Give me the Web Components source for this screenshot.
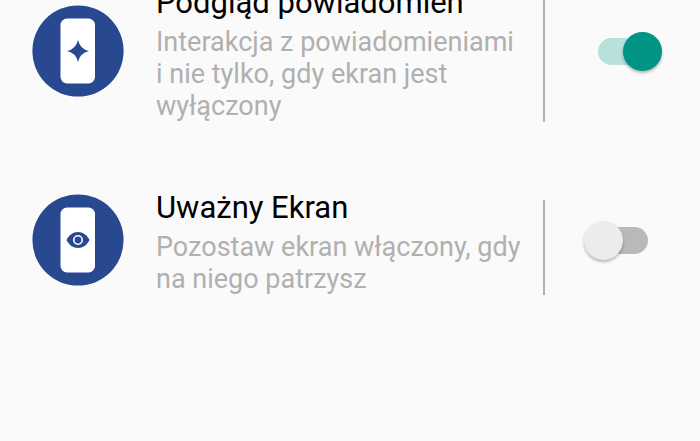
<!DOCTYPE html>
<html lang="pl">
<head>
<meta charset="utf-8">
<meta name="viewport" content="width=device-width, initial-scale=1">
<title>Ustawienia ekranu</title>
<style>
  body {
    margin: 0;
    background: #fafafa;
    color: #000;
    font-family: Roboto, "Liberation Sans", sans-serif;
  }
</style>
</head>
<body>
<settings-list>
  <setting-row checked>
    <phone-icon slot="icon" symbol="star"></phone-icon>
    Podgląd powiadomień
    <span slot="summary">Interakcja z powiadomieniami i nie tylko, gdy ekran jest wyłączony</span>
  </setting-row>
  <setting-row>
    <phone-icon slot="icon" symbol="eye"></phone-icon>
    Uważny Ekran
    <span slot="summary">Pozostaw ekran włączony, gdy na niego patrzysz</span>
  </setting-row>
</settings-list>

<script>
class SettingsList extends HTMLElement {
  constructor() {
    super();
    this.attachShadow({ mode: "open" });
  }

  connectedCallback() {
    // the list is scrolled a little past its first title
    this.shadowRoot.innerHTML = `
      <style>
        :host {
          display: flex;
          flex-direction: column;
          gap: 66px;
          margin-top: -17px;
        }
      </style>
      <slot></slot>
    `;
  }
}

class PhoneIcon extends HTMLElement {
  constructor() {
    super();
    this.attachShadow({ mode: "open" });
  }

  connectedCallback() {
    const symbols = {
      star: `<path fill="#284990" d="M46 35Q48 44 57 46Q48 48 46 57Q44 48 35 46Q44 44 46 35Z"/>`,
      eye: `
        <path fill="#284990" d="M34.5 46C37 41 41 38 46 38S55 41 57.5 46C55 51 51 54 46 54S37 51 34.5 46Z"/>
        <circle cx="46" cy="46" r="4.2" fill="#284990" stroke="#fff" stroke-width="1.6"/>
      `,
    };

    this.shadowRoot.innerHTML = `
      <style>
        :host {
          display: block;
        }
        svg {
          display: block;
          width: 92px;
          height: 92px;
        }
      </style>
      <svg viewBox="0 0 92 92" aria-hidden="true">
        <circle cx="46" cy="46" r="45.6" fill="#284990"/>
        <rect x="28.5" y="13.5" width="34.5" height="65" rx="6.5" fill="#fff"/>
        ${symbols[this.getAttribute("symbol")] || ""}
      </svg>
    `;
  }
}

class SettingRow extends HTMLElement {
  constructor() {
    super();
    this.attachShadow({ mode: "open" });
  }

  connectedCallback() {
    this.shadowRoot.innerHTML = `
      <style>
        :host {
          display: flex;
          align-items: center;
          padding: 0 38px 0 32px;
        }
        ::slotted(phone-icon) {
          margin-bottom: 3px;
        }
        .text {
          flex: 1;
          min-width: 0;
          margin: 0 16px 0 32px;
        }
        label {
          display: block;
          font-size: 31px;
          line-height: 40px;
        }
        .summary {
          padding-top: 3px;
          color: #b0b0b0;
          font-size: 27px;
          line-height: 32px;
        }
        .divider {
          align-self: stretch;
          width: 2px;
          margin: 12px 39px 0 0;
          background: #b0b0b0;
        }
        input {
          appearance: none;
          flex: none;
          display: flex;
          align-items: center;
          box-sizing: border-box;
          width: 78px;
          height: 39px;
          margin: 0 0 3px;
          padding: 0 14px;
          position: relative;
          cursor: pointer;
        }
        input::before {
          content: "";
          flex: 1;
          height: 27px;
          border-radius: 14px;
          background: #b9b9b9;
        }
        /* the thumb overhangs the track */
        input::after {
          content: "";
          position: absolute;
          left: 0;
          width: 39px;
          height: 39px;
          border-radius: 50%;
          background: #ececec;
          box-shadow: 0 2px 3px rgba(0, 0, 0, 0.28);
        }
        input:checked::before {
          background: #b8e0dc;
        }
        input:checked::after {
          left: auto;
          right: 0;
          background: #009485;
        }
      </style>
      <slot name="icon"></slot>
      <div class="text">
        <label for="toggle"><slot></slot></label>
        <div class="summary" id="summary"><slot name="summary"></slot></div>
      </div>
      <div class="divider"></div>
      <input type="checkbox" role="switch" id="toggle" aria-describedby="summary">
    `;

    this.shadowRoot.querySelector("input").checked = this.hasAttribute("checked");
  }
}

customElements.define("settings-list", SettingsList);
customElements.define("phone-icon", PhoneIcon);
customElements.define("setting-row", SettingRow);
</script>
</body>
</html>
